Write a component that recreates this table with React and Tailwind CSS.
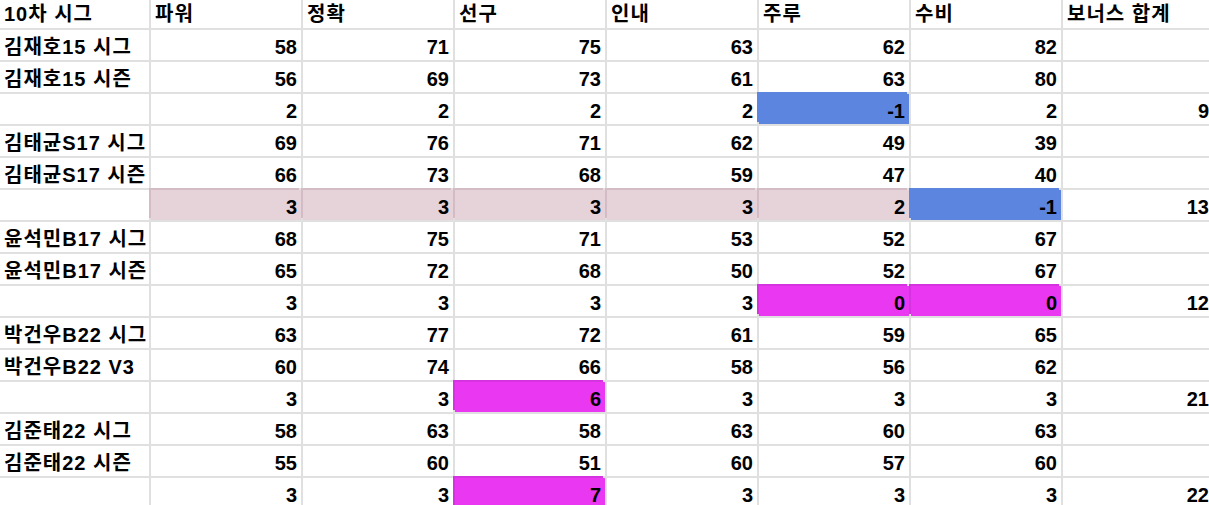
const headers = ['10차 시그', '파워', '정확', '선구', '인내', '주루', '수비', '보너스 합계'];

// fill codes: b = blue, m = magenta, p = pink
const rows = [
    { name: '김재호15 시그', v: [58, 71, 75, 63, 62, 82] },
    { name: '김재호15 시즌', v: [56, 69, 73, 61, 63, 80] },
    { v: [2, 2, 2, 2, -1, 2], fill: ['', '', '', '', 'b', ''], total: 9 },
    { name: '김태균S17 시그', v: [69, 76, 71, 62, 49, 39] },
    { name: '김태균S17 시즌', v: [66, 73, 68, 59, 47, 40] },
    { v: [3, 3, 3, 3, 2, -1], fill: ['p', 'p', 'p', 'p', 'p', 'b'], total: 13 },
    { name: '윤석민B17 시그', v: [68, 75, 71, 53, 52, 67] },
    { name: '윤석민B17 시즌', v: [65, 72, 68, 50, 52, 67] },
    { v: [3, 3, 3, 3, 0, 0], fill: ['', '', '', '', 'm', 'm'], total: 12 },
    { name: '박건우B22 시그', v: [63, 77, 72, 61, 59, 65] },
    { name: '박건우B22 V3', v: [60, 74, 66, 58, 56, 62] },
    { v: [3, 3, 6, 3, 3, 3], fill: ['', '', 'm', '', '', ''], total: 21 },
    { name: '김준태22 시그', v: [58, 63, 58, 63, 60, 63] },
    { name: '김준태22 시즌', v: [55, 60, 51, 60, 57, 60] },
    { v: [3, 3, 7, 3, 3, 3], fill: ['', '', 'm', '', '', ''], total: 22 },
];

const fills = {
    '': 'bg-white',
    b: 'bg-[#5b85df] shadow-[-2px_-2px_0_0_#5b85df]',
    m: 'bg-[#e937f2] shadow-[-2px_-2px_0_0_#d533df]',
    p: 'bg-[#e6d3da] shadow-[-2px_-2px_0_0_#d4bcc6]',
};

const Cell = ({ children, right, fill = '', header }) => (
    <div
        className={`flex items-end px-1 leading-[22px] overflow-hidden whitespace-nowrap ${
            header ? 'h-[28px] pb-[3px]' : 'h-[30px] pb-[2px]'
        } ${right ? 'justify-end' : 'justify-start tracking-[1px]'} ${fills[fill]}`}
    >
        {children}
    </div>
);

export default function App() {
    return (
        <div className="w-[1209px] h-[505px] overflow-hidden bg-white">
            <div
                className="grid grid-cols-[149px_repeat(7,150px)] gap-[2px] bg-[#e0e0e0] w-max text-[20px] font-bold text-black"
                style={{ fontFamily: '"Liberation Sans", "Noto Sans CJK KR", sans-serif' }}
            >
                {headers.map((h) => (
                    <Cell key={h} header>{h}</Cell>
                ))}
                {rows.map((r, i) => (
                    <div key={i} className="contents">
                        <Cell>{r.name || ''}</Cell>
                        {r.v.map((n, j) => (
                            <Cell key={j} right fill={r.fill ? r.fill[j] : ''}>{n}</Cell>
                        ))}
                        <Cell right>{r.total ?? ''}</Cell>
                    </div>
                ))}
            </div>
        </div>
    );
}
